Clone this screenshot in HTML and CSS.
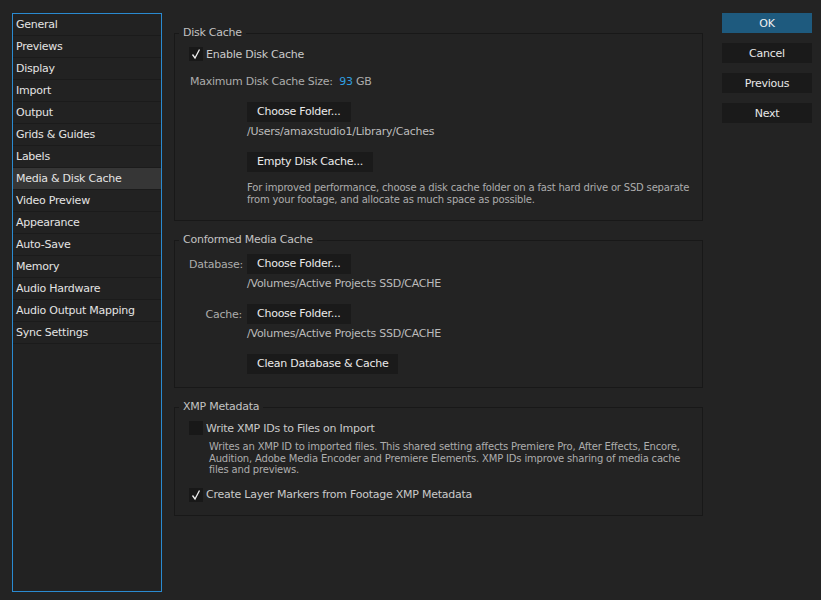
FILE: index.html
```html
<!DOCTYPE html>
<html>
<head>
<meta charset="utf-8">
<link rel="stylesheet" href="styles.css">
</head>
<body>
<div class="dialog">
  <ul class="nav">
    <li>General</li>
    <li>Previews</li>
    <li>Display</li>
    <li>Import</li>
    <li>Output</li>
    <li>Grids &amp; Guides</li>
    <li>Labels</li>
    <li class="active">Media &amp; Disk Cache</li>
    <li>Video Preview</li>
    <li>Appearance</li>
    <li>Auto-Save</li>
    <li>Memory</li>
    <li>Audio Hardware</li>
    <li>Audio Output Mapping</li>
    <li>Sync Settings</li>
  </ul>

  <div class="main">
    <section class="group g1">
      <span class="group-title">Disk Cache</span>
      <div class="check-row">
        <span class="box"><svg viewBox="0 0 14 14" width="14" height="14"><polyline points="3.5,7.5 6,11 10.5,2.5" fill="none" stroke="#eee" stroke-width="1.3"/></svg></span>
        <span class="check-label">Enable Disk Cache</span>
      </div>
      <div class="size-row">Maximum Disk Cache Size:&nbsp; <span class="num">93</span> GB</div>
      <div class="indent">
        <div class="btn b-choose">Choose Folder...</div>
        <div class="path">/Users/amaxstudio1/Library/Caches</div>
        <div class="btn b-empty">Empty Disk Cache...</div>
        <p class="desc d1">For improved performance, choose a disk cache folder on a fast hard drive or SSD separate<br>from your footage, and allocate as much space as possible.</p>
      </div>
    </section>

    <section class="group g2">
      <span class="group-title">Conformed Media Cache</span>
      <div class="field-row">
        <span class="field-label">Database:</span>
        <div class="btn">Choose Folder...</div>
      </div>
      <div class="path indent">/Volumes/Active Projects SSD/CACHE</div>
      <div class="field-row r2">
        <span class="field-label">Cache:</span>
        <div class="btn">Choose Folder...</div>
      </div>
      <div class="path indent">/Volumes/Active Projects SSD/CACHE</div>
      <div class="indent">
        <div class="btn b-clean">Clean Database &amp; Cache</div>
      </div>
    </section>

    <section class="group g3">
      <span class="group-title">XMP Metadata</span>
      <div class="check-row">
        <span class="box"></span>
        <span class="check-label">Write XMP IDs to Files on Import</span>
      </div>
      <p class="desc d2">Writes an XMP ID to imported files. This shared setting affects Premiere Pro, After Effects, Encore,<br>Audition, Adobe Media Encoder and Premiere Elements. XMP IDs improve sharing of media cache<br>files and previews.</p>
      <div class="check-row c2">
        <span class="box"><svg viewBox="0 0 14 14" width="14" height="14"><polyline points="3.5,7.5 6,11 10.5,2.5" fill="none" stroke="#eee" stroke-width="1.3"/></svg></span>
        <span class="check-label">Create Layer Markers from Footage XMP Metadata</span>
      </div>
    </section>
  </div>

  <div class="actions">
    <div class="abtn ok">OK</div>
    <div class="abtn">Cancel</div>
    <div class="abtn">Previous</div>
    <div class="abtn">Next</div>
  </div>
</div>
</body>
</html>
```

FILE: styles.css
```css
html, body {
  margin: 0;
  padding: 0;
  background: #232323;
}
body {
  font-family: "DejaVu Sans", sans-serif;
  font-size: 11px;
  letter-spacing: -0.25px;
  color: #c4c4c4;
  width: 821px;
  height: 600px;
  overflow: hidden;
}
.dialog {
  display: flex;
  align-items: flex-start;
}

/* sidebar */
.nav {
  list-style: none;
  margin: 13px 0 0 12px;
  padding: 0;
  width: 148px;
  height: 577px;
  border: 1px solid #2a8ad0;
  background: #222222;
}
.nav li {
  height: 20px;
  line-height: 20px;
  padding-top: 1px;
  padding-left: 3px;
  border-bottom: 1px solid #1b1b1b;
  color: #e4e4e4;
  white-space: nowrap;
}
.nav li.active {
  background: #363636;
}

/* main */
.main {
  margin-left: 12px;
  padding-top: 33px;
  width: 529px;
  display: flex;
  flex-direction: column;
}
.group {
  position: relative;
  border: 1px solid #181818;
  padding-left: 14px;
}
.group-title {
  position: absolute;
  top: -8px;
  left: 4px;
  padding: 0 4px;
  line-height: 14px;
  background: #232323;
  color: #c2c2c2;
}
.g1 { padding-top: 13px; padding-bottom: 14px; }
.g2 { margin-top: 19px; padding-top: 13px; padding-bottom: 13px; }
.g3 { margin-top: 19px; padding-top: 13px; padding-bottom: 13px; }

.check-row {
  display: flex;
  align-items: center;
  height: 14px;
}
.box {
  width: 14px;
  height: 14px;
  background: #181818;
  display: block;
}
.box svg { display: block; }
.check-label {
  margin-left: 3px;
  color: #cacaca;
}
.size-row {
  margin-top: 14px;
  margin-left: 1px;
  line-height: 14px;
  color: #acacac;
}
.num { color: #2f9fe0; }

.indent { margin-left: 58px; }

.btn {
  display: inline-block;
  height: 20px;
  line-height: 20px;
  padding: 0 10px;
  background: #1a1a1a;
  color: #eaeaea;
  white-space: nowrap;
}
.b-choose { margin-top: 13px; }
.b-empty { margin-top: 13px; }
.path {
  margin-top: 3px;
  line-height: 14px;
  color: #bbbbbb;
  white-space: nowrap;
}
.desc {
  margin: 0;
  font-size: 10px;
  line-height: 12px;
  letter-spacing: -0.18px;
  color: #adadad;
  white-space: nowrap;
}
.d1 { margin-top: 10px; }
.d2 { margin-top: 6px; margin-left: 20px; line-height: 11.5px; }
.c2 { margin-top: 12px; }

.field-row {
  display: flex;
  align-items: center;
}
.field-label {
  width: 53px;
  padding-right: 5px;
  text-align: right;
  color: #acacac;
}
.r2 { margin-top: 13px; }
.b-clean { margin-top: 13px; }

/* right buttons */
.actions {
  margin-left: 19px;
  margin-top: 13px;
  width: 90px;
  display: flex;
  flex-direction: column;
  gap: 10px;
}
.abtn {
  height: 19px;
  line-height: 19px;
  padding-top: 1px;
  text-align: center;
  background: #1a1a1a;
  color: #e8e8e8;
}
.abtn.ok {
  background: #1e5a7e;
  color: #f0f0f0;
}
```
